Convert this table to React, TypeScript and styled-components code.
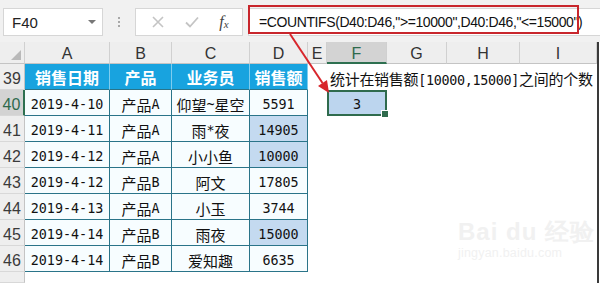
import React from "react";
import styled, { createGlobalStyle, css } from "styled-components";

const GlobalStyle = createGlobalStyle`
  html, body { margin: 0; padding: 0; background: #fff; }
  body { width: 600px; height: 283px; overflow: hidden; }
`;

const COLS = [25, 85, 62, 78, 58, 19, 60, 60, 73, 77];
const LETTERS = ["A", "B", "C", "D", "E", "F", "G", "H", "I"];

const Frame = styled.div`
  position: relative;
  width: 600px;
  height: 283px;
  overflow: hidden;
  background: #fff;
  font-family: "Noto Sans CJK SC", sans-serif;
`;

const FormulaBar = styled.div`
  height: 42px;
  box-sizing: border-box;
  background: #f1f1f1;
  display: flex;
  align-items: flex-start;
  padding: 8px 0 0 3px;
`;

const Box = styled.div<{ $w?: number }>`
  height: 28px;
  box-sizing: border-box;
  background: #fff;
  border: 1px solid #d6d6d6;
  display: flex;
  align-items: center;
  ${(p) => (p.$w ? css`width: ${p.$w}px;` : css`flex: 1;`)}
`;

const NameBox = styled(Box)`
  justify-content: space-between;
  padding: 0 6px 0 8px;
  font-family: "Liberation Sans", sans-serif;
  font-size: 15px;
  color: #222;
`;

const Caret = styled.span`
  width: 0;
  height: 0;
  border-left: 4px solid transparent;
  border-right: 4px solid transparent;
  border-top: 4px solid #777;
`;

const Grip = styled.div`
  width: 32px;
  height: 28px;
  display: flex;
  flex-direction: column;
  align-items: center;
  justify-content: center;
  gap: 2px;
  & > span {
    width: 2px;
    height: 2px;
    background: #a8a8a8;
  }
`;

const ButtonsBox = styled(Box)`
  justify-content: space-around;
  padding: 0 4px 0 6px;
`;

const Fx = styled.span`
  font-family: "Liberation Serif", serif;
  font-style: italic;
  font-size: 16px;
  color: #444;
  & sub { font-size: 11px; vertical-align: -1px; }
`;

const FormulaInput = styled(Box)`
  margin-left: 5px;
  border-right: none;
  padding-left: 10px;
  font-family: "Liberation Sans", sans-serif;
  font-size: 14px;
  letter-spacing: -0.4px;
  color: #111;
  white-space: nowrap;
`;

const Sheet = styled.div`
  display: grid;
  grid-template-columns: ${COLS.map((c) => c + "px").join(" ")};
  grid-template-rows: 22px repeat(8, 26px) 1fr;
  height: 241px;
  width: 599px;
  box-sizing: border-box;
  border-right: 2px solid #3a3a3a;
  overflow: hidden;
`;

type Kind =
  | "corner"
  | "colhead"
  | "colheadSel"
  | "rowhead"
  | "rowheadSel"
  | "thead"
  | "data"
  | "dataHl"
  | "selected"
  | "empty";

const Cell = styled.div<{ $k: Kind }>`
  box-sizing: border-box;
  display: flex;
  align-items: center;
  justify-content: center;
  white-space: nowrap;
  min-width: 0;
  position: relative;
  ${(p) => {
    switch (p.$k) {
      case "corner":
        return css`
          background: #eeeeee;
          border-right: 1px solid #d0d0d0;
          border-bottom: 1px solid #c4c4c4;
        `;
      case "colhead":
      case "colheadSel":
        return css`
          background: ${p.$k === "colheadSel" ? "#d3d3d3" : "#eeeeee"};
          border-right: 1px solid #d0d0d0;
          border-bottom: ${p.$k === "colheadSel" ? "2px solid #2e7050" : "1px solid #c4c4c4"};
          font-family: "Liberation Sans", sans-serif;
          font-size: 16px;
          color: ${p.$k === "colheadSel" ? "#2e6a4c" : "#333"};
          padding-top: 3px;
        `;
      case "rowhead":
      case "rowheadSel":
        return css`
          background: ${p.$k === "rowheadSel" ? "#d3d3d3" : "#eeeeee"};
          border-right: ${p.$k === "rowheadSel" ? "2px solid #2e7050" : "1px solid #c4c4c4"};
          border-bottom: 1px solid #d8d8d8;
          font-family: "Liberation Sans", sans-serif;
          font-size: 16px;
          color: ${p.$k === "rowheadSel" ? "#2e6a4c" : "#3a3a3a"};
          align-items: flex-end;
          padding-bottom: 1px;
        `;
      case "thead":
        return css`
          background: #18a3df;
          color: #fff;
          font-weight: 700;
          font-size: 16px;
          border-right: 1px solid #7fcdef;
          border-bottom: 1px solid #2a7489;
        `;
      case "data":
      case "dataHl":
        return css`
          background: ${p.$k === "dataHl" ? "#c4daf0" : "#f7fdff"};
          border-right: 1px solid #2a7489;
          border-bottom: 1px solid #2a7489;
          font-size: 15px;
          color: #111;
          padding-top: 3px;
        `;
      case "selected":
        return css`
          background: #bcd5ee;
          border: 2px solid #2f6b4d;
          font-size: 15px;
          color: #111;
          padding-top: 2px;
        `;
      default:
        return css`
          background: transparent;
          justify-content: flex-start;
          overflow: visible;
        `;
    }
  }}
`;

const Handle = styled.span`
  position: absolute;
  right: -4px;
  bottom: -4px;
  width: 6px;
  height: 6px;
  background: #2f6b4d;
  border: 1px solid #fff;
`;

const Half = styled.span`
  font-family: "DejaVu Sans Mono", monospace;
  font-size: 13.4px;
`;

const Wide = styled.span`
  font-family: "Noto Sans CJK SC", sans-serif;
`;

const Note = styled.span`
  font-size: 15px;
  color: #111;
  padding: 2px 0 0 3px;
  letter-spacing: -0.3px;
`;

const Triangle = styled.span`
  position: absolute;
  right: 3px;
  bottom: 3px;
  width: 0;
  height: 0;
  border-left: 10px solid transparent;
  border-bottom: 10px solid #b9b9b9;
`;

const RedBox = styled.div`
  position: absolute;
  left: 248px;
  top: 5px;
  width: 331px;
  height: 29px;
  box-sizing: border-box;
  border: 2px solid #c8262c;
  pointer-events: none;
`;

const Overlay = styled.svg`
  position: absolute;
  left: 0;
  top: 0;
  pointer-events: none;
`;

const Watermark = styled.div`
  position: absolute;
  left: 458px;
  top: 218px;
  display: flex;
  flex-direction: column;
  align-items: flex-start;
  color: #f1f1f1;
  pointer-events: none;
`;

const WmTop = styled.div`
  font-family: "Liberation Sans", sans-serif;
  font-weight: 700;
  font-size: 24px;
  line-height: 28px;
  letter-spacing: 1px;
`;

const WmBottom = styled.div`
  font-family: "Liberation Sans", sans-serif;
  font-size: 12.5px;
  line-height: 14px;
  letter-spacing: 0.2px;
`;

function Mixed({ text }: { text: string }) {
  const parts = text.match(/[\u3000-\u9fff\uff00-\uffef]+|[^\u3000-\u9fff\uff00-\uffef]+/g) || [];
  return (
    <>
      {parts.map((s, i) =>
        /[\u3000-\u9fff\uff00-\uffef]/.test(s) ? <Wide key={i}>{s}</Wide> : <Half key={i}>{s}</Half>
      )}
    </>
  );
}

const HEAD = ["销售日期", "产品", "业务员", "销售额"];
const ROWS: [string, string, string, string, boolean][] = [
  ["2019-4-10", "产品A", "仰望~星空", "5591", false],
  ["2019-4-11", "产品A", "雨*夜", "14905", true],
  ["2019-4-12", "产品A", "小小鱼", "10000", true],
  ["2019-4-12", "产品B", "阿文", "17805", false],
  ["2019-4-13", "产品A", "小玉", "3744", false],
  ["2019-4-14", "产品B", "雨夜", "15000", true],
  ["2019-4-14", "产品B", "爱知趣", "6635", false],
];

export default function App() {
  const cells: React.ReactNode[] = [];
  cells.push(
    <Cell key="corner" $k="corner">
      <Triangle />
    </Cell>
  );
  LETTERS.forEach((l) =>
    cells.push(
      <Cell key={"c" + l} $k={l === "F" ? "colheadSel" : "colhead"}>
        {l}
      </Cell>
    )
  );
  cells.push(<Cell key="r39" $k="rowhead">39</Cell>);
  HEAD.forEach((h) => cells.push(<Cell key={"h" + h} $k="thead">{h}</Cell>));
  cells.push(<Cell key="e39" $k="empty" />);
  cells.push(
    <Cell key="f39" $k="empty">
      <Note>
        <Mixed text="统计在销售额[10000,15000]之间的个数" />
      </Note>
    </Cell>
  );
  ["g", "h", "i"].forEach((c) => cells.push(<Cell key={c + "39"} $k="empty" />));
  ROWS.forEach((r, i) => {
    const n = 40 + i;
    cells.push(
      <Cell key={"r" + n} $k={n === 40 ? "rowheadSel" : "rowhead"}>
        {n}
      </Cell>
    );
    for (let j = 0; j < 4; j++) {
      cells.push(
        <Cell key={n + "-" + j} $k={j === 3 && r[4] ? "dataHl" : "data"}>
          <Mixed text={r[j] as string} />
        </Cell>
      );
    }
    cells.push(<Cell key={"e" + n} $k="empty" />);
    if (n === 40) {
      cells.push(
        <Cell key="f40" $k="selected">
          <Half>3</Half>
          <Handle />
        </Cell>
      );
    } else {
      cells.push(<Cell key={"f" + n} $k="empty" />);
    }
    ["g", "h", "i"].forEach((c) => cells.push(<Cell key={c + n} $k="empty" />));
  });
  cells.push(<Cell key="r47" $k="rowhead" />);

  return (
    <Frame>
      <GlobalStyle />
      <FormulaBar>
        <NameBox $w={100}>
          <span>F40</span>
          <Caret />
        </NameBox>
        <Grip>
          <span />
          <span />
          <span />
        </Grip>
        <ButtonsBox $w={108}>
          <svg width="14" height="14" viewBox="0 0 14 14">
            <path d="M2 2 L12 12 M12 2 L2 12" stroke="#c4c4c4" strokeWidth="1.6" />
          </svg>
          <svg width="16" height="14" viewBox="0 0 16 14">
            <path d="M2 7.5 L6 11.5 L14 2.5" stroke="#c4c4c4" strokeWidth="1.8" fill="none" />
          </svg>
          <Fx>
            f<sub>x</sub>
          </Fx>
        </ButtonsBox>
        <FormulaInput>=COUNTIFS(D40:D46,"&gt;=10000",D40:D46,"&lt;=15000")</FormulaInput>
      </FormulaBar>
      <Sheet>{cells}</Sheet>
      <RedBox />
      <Overlay width="600" height="283" viewBox="0 0 600 283">
        <line x1="290" y1="34" x2="322.5" y2="83" stroke="#d8262c" strokeWidth="2" />
        <polygon points="329,93 318,86 327,80" fill="#d8262c" />
      </Overlay>
      <Watermark>
        <WmTop>Bai du 经验</WmTop>
        <WmBottom>jingyan.baidu.com</WmBottom>
      </Watermark>
    </Frame>
  );
}
